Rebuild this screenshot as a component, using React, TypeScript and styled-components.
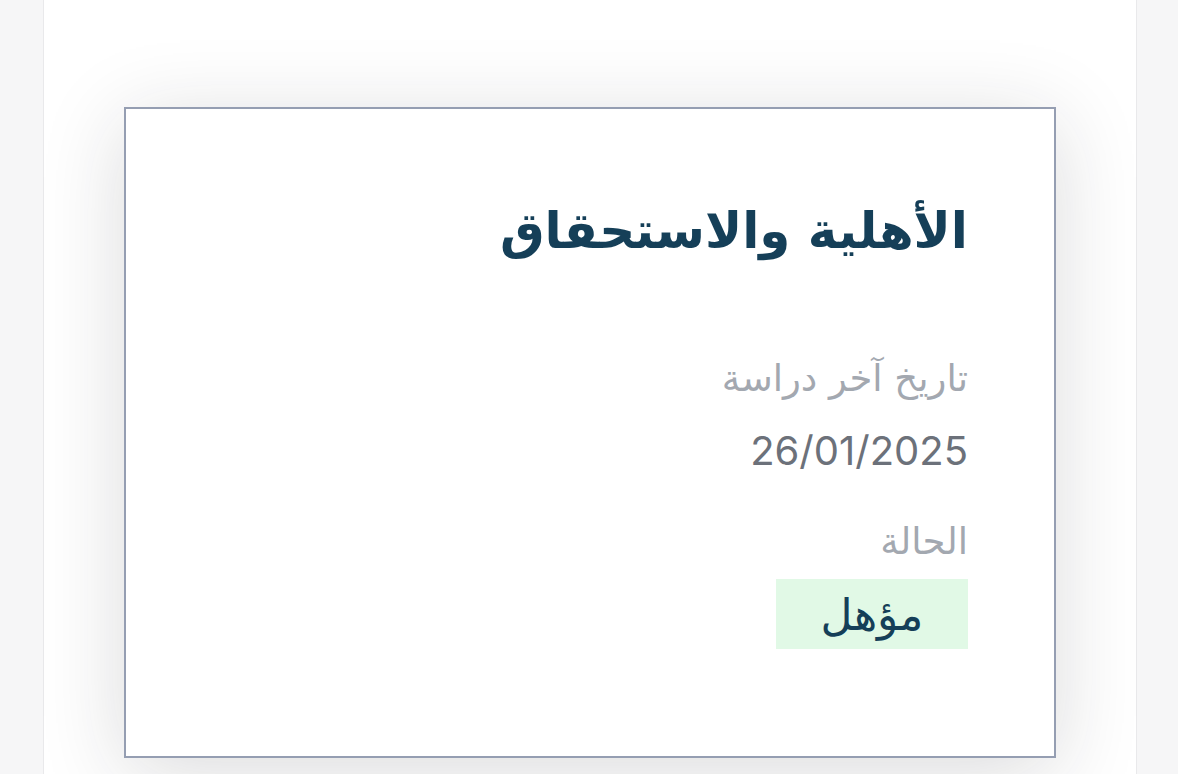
import React from "react";
import styled, { createGlobalStyle } from "styled-components";

const Global = createGlobalStyle`
  html, body { margin: 0; padding: 0; background: #f6f6f7; }
  body { font-family: "DejaVu Sans", "Noto Sans", sans-serif; }
  #root { height: 774px; overflow: hidden; }
`;

const Page = styled.div`
  display: flex;
  height: 774px;
  padding-left: 43px;
`;

const Panel = styled.div`
  width: 1094px;
  flex: none;
  background: #ffffff;
  border-left: 1px solid #e9e9eb;
  border-right: 1px solid #e9e9eb;
  padding: 107px 0 0 80px;
  box-sizing: border-box;
`;

const Card = styled.section`
  width: 932px;
  height: 651px;
  border: 2px solid #959eb2;
  background: #fff;
  box-shadow: 0 14px 80px rgba(30, 30, 40, 0.16);
  direction: rtl;
  padding: 88px 86px 0 0;
  box-sizing: border-box;
  display: flex;
  flex-direction: column;
  align-items: flex-start;
`;

const Title = styled.h2`
  margin: 0 0 89px;
  font-size: 50px;
  line-height: 68px;
  font-weight: 700;
  color: #153f58;
`;

const Label = styled.div`
  font-size: 37px;
  line-height: 50px;
  color: #a3a8b0;
  margin-bottom: 12px;
`;

const Value = styled.div`
  font-family: "Inter", "Liberation Sans", sans-serif;
  font-size: 40px;
  line-height: 70px;
  color: #6c717a;
  margin-bottom: 31px;
`;

const Badge = styled.div`
  width: 192px;
  height: 70px;
  background: #e1f9e6;
  color: #153f58;
  font-size: 44px;
  display: flex;
  align-items: center;
  justify-content: center;
`;

export default function App() {
  return (
    <>
      <Global />
      <Page>
        <Panel>
          <Card>
            <Title>الأهلية والاستحقاق</Title>
            <Label>تاريخ آخر دراسة</Label>
            <Value>26/01/2025</Value>
            <Label>الحالة</Label>
            <Badge>مؤهل</Badge>
          </Card>
        </Panel>
      </Page>
    </>
  );
}
